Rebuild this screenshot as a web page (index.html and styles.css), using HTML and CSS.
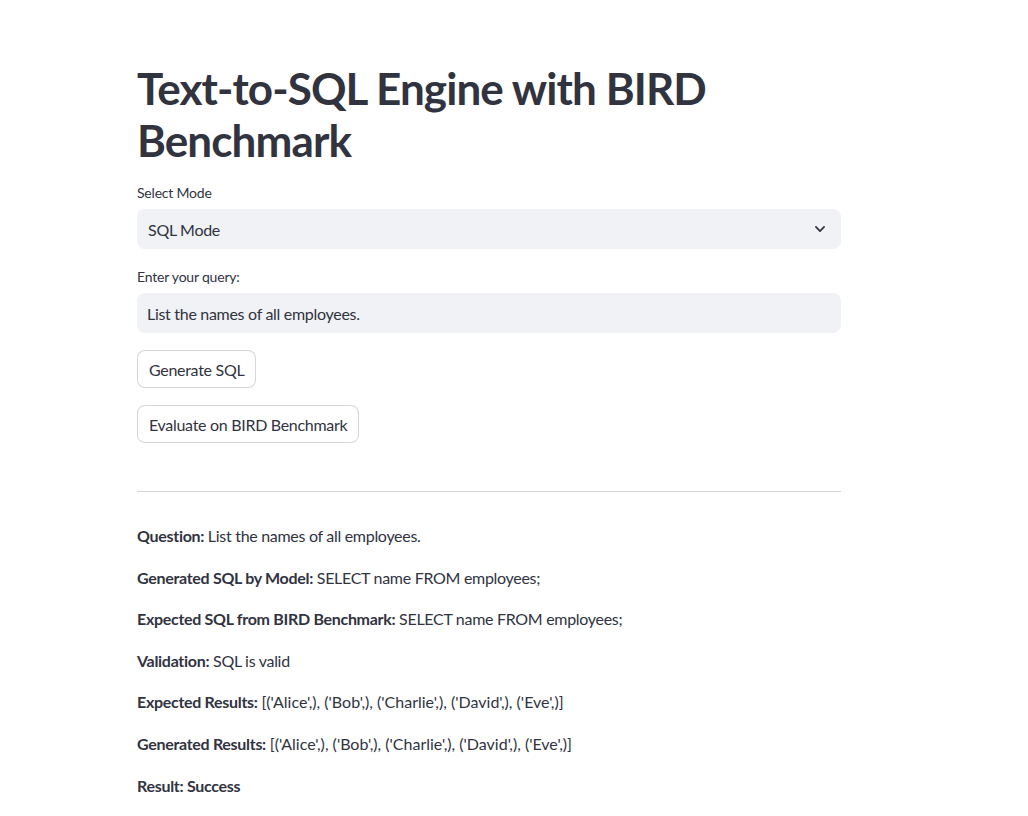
FILE: index.html
```html
<!DOCTYPE html>
<html>
<head>
<meta charset="utf-8">
<link rel="stylesheet" href="styles.css">
</head>
<body>
<main class="app">
  <h1 class="title">Text-to-SQL Engine with BIRD Benchmark</h1>
  <div class="field">
    <div class="label">Select Mode</div>
    <div class="select">
      <span>SQL Mode</span>
      <svg class="chev" width="14" height="14" viewBox="0 0 24 24"><path d="M5 8.5l7 7 7-7" fill="none" stroke="#31333F" stroke-width="3" stroke-linecap="round" stroke-linejoin="round"/></svg>
    </div>
  </div>
  <div class="field field-last">
    <div class="label">Enter your query:</div>
    <div class="input">List the names of all employees.</div>
  </div>
  <div class="btn-row"><button class="btn">Generate SQL</button></div>
  <div class="btn-row"><button class="btn">Evaluate on BIRD Benchmark</button></div>
  <hr class="divider">
  <div class="results">
    <p><b>Question:</b> List the names of all employees.</p>
    <p><b>Generated SQL by Model:</b> SELECT name FROM employees;</p>
    <p><b>Expected SQL from BIRD Benchmark:</b> SELECT name FROM employees;</p>
    <p><b>Validation:</b> SQL is valid</p>
    <p><b>Expected Results:</b> <span class="data">[('Alice',), ('Bob',), ('Charlie',), ('David',), ('Eve',)]</span></p>
    <p><b>Generated Results:</b> <span class="data">[('Alice',), ('Bob',), ('Charlie',), ('David',), ('Eve',)]</span></p>
    <p><b>Result: Success</b></p>
  </div>
</main>
</body>
</html>
```
FILE: styles.css
```css
* { box-sizing: border-box; }
html, body { margin: 0; padding: 0; background: #ffffff; }
body {
  font-family: Lato, "Noto Sans", sans-serif;
  color: #31333F;
  font-size: 16px;
  letter-spacing: -0.3px;
}
.app {
  width: 704px;
  margin-left: 137px;
  padding-top: 62px;
}
.title {
  margin: 0 0 17px 0;
  font-size: 44px;
  font-weight: 700;
  line-height: 52px;
  letter-spacing: -0.9px;
}
.field { margin-bottom: 18px; }
.field-last { margin-bottom: 17px; }
.label {
  font-size: 14px;
  line-height: 20px;
  margin-bottom: 6px;
  letter-spacing: -0.2px;
}
.select, .input {
  height: 40px;
  background: #F0F2F6;
  border-radius: 8px;
  display: flex;
  align-items: center;
  font-size: 16px;
}
.select {
  justify-content: space-between;
  padding: 0 14px 0 11px;
}
.input { padding: 0 10px; }
.btn-row { margin-bottom: 17px; }
.btn {
  font-family: inherit;
  font-size: 16px;
  letter-spacing: -0.3px;
  color: #31333F;
  background: #fff;
  border: 1px solid rgba(49,51,63,0.2);
  border-radius: 8px;
  height: 38px;
  padding: 0 11px;
}
.divider {
  border: none;
  border-top: 1px solid rgba(49,51,63,0.2);
  margin: 48px 0 31px 0;
}
.results p {
  margin: 0 0 16px 0;
  line-height: 25.6px;
}
.results b { font-weight: 700; }
.data { letter-spacing: 0; }
```
